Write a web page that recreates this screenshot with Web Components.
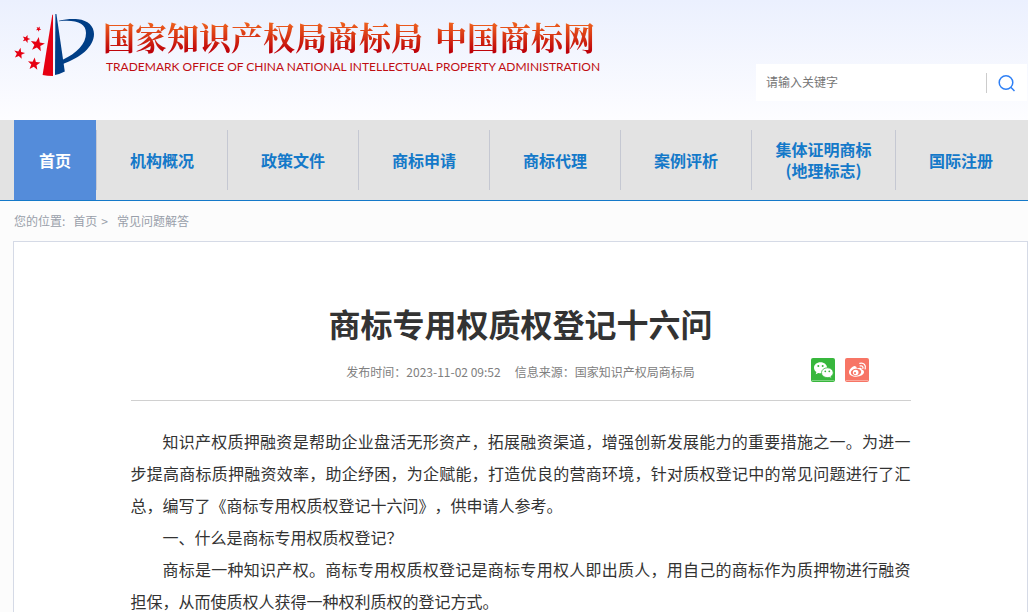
<!DOCTYPE html>
<html lang="zh-CN">
<head>
<meta charset="utf-8">
<meta name="viewport" content="width=device-width, initial-scale=1">
<title>商标专用权质权登记十六问</title>
<style>
    body {
        margin: 0;
        background: #fcfcfc;
        color: #333;
        font-family: "Noto Sans CJK SC", sans-serif;
        font-size: 12px;
        text-spacing-trim: space-all;
    }
</style>
</head>
<body>
<site-header>
    <site-logo></site-logo>
    <site-search></site-search>
</site-header>
<site-nav>
    <nav-item active>首页</nav-item>
    <nav-item>机构概况</nav-item>
    <nav-item>政策文件</nav-item>
    <nav-item>商标申请</nav-item>
    <nav-item>商标代理</nav-item>
    <nav-item>案例评析</nav-item>
    <nav-item wide>集体证明商标<br>(地理标志)</nav-item>
    <nav-item>国际注册</nav-item>
</site-nav>
<bread-crumb></bread-crumb>
<article-card>
    <span slot="title">商标专用权质权登记十六问</span>
    <span slot="date">发布时间：2023-11-02 09:52</span>
    <span slot="source">信息来源：国家知识产权局商标局</span>
    <share-links slot="share"></share-links>
    <p>知识产权质押融资是帮助企业盘活无形资产，拓展融资渠道，增强创新发展能力的重要措施之一。为进一步提高商标质押融资效率，助企纾困，为企赋能，打造优良的营商环境，针对质权登记中的常见问题进行了汇总，编写了《商标专用权质权登记十六问》，供申请人参考。</p>
    <p>一、什么是商标专用权质权登记？</p>
    <p>商标是一种知识产权。商标专用权质权登记是商标专用权人即出质人，用自己的商标作为质押物进行融资担保，从而使质权人获得一种权利质权的登记方式。</p>
</article-card>

<script>
class SiteHeader extends HTMLElement {
    constructor() {
        super();
        this.attachShadow({ mode: 'open' });
        this.shadowRoot.innerHTML = `
            <style>
                :host {
                    display: block;
                    background: linear-gradient(#ebf0fe, #fdfdff);
                }
                header {
                    display: flex;
                    justify-content: space-between;
                    align-items: flex-start;
                    height: 106px;
                    padding: 14px 1px 0 14px;
                }
                ::slotted(site-search) {
                    margin-top: 50px;
                }
            </style>
            <header><slot></slot></header>
        `;
    }
}

class SiteLogo extends HTMLElement {
    constructor() {
        super();
        this.attachShadow({ mode: 'open' });
        this.shadowRoot.innerHTML = `
            <style>
                :host {
                    display: block;
                }
                a {
                    display: flex;
                    gap: 7px;
                    text-decoration: none;
                    white-space: nowrap;
                }
                svg {
                    display: block;
                    flex: none;
                }
                .name {
                    display: flex;
                    gap: 12px;
                    margin-top: 2px;
                    font: 700 32px/40px "Noto Serif CJK SC", "Noto Sans CJK SC", serif;
                    color: transparent;
                    background: linear-gradient(#f0641e 15%, #bd0009 90%);
                    -webkit-background-clip: text;
                    background-clip: text;
                }
                .en {
                    padding-left: 3px;
                    font: 12px/22px Lato, sans-serif;
                    color: #c00d12;
                }
            </style>
            <a href="#">
                <svg width="82" height="63" viewBox="14 14 82 63" aria-hidden="true">
                    <defs>
                        <path id="star" d="M0-10 2.5-3.2 9.5-3.1 4 1.3 5.9 8.1 0 4.2-5.9 8.1-4 1.3-9.5-3.1-2.5-3.2Z"/>
                    </defs>
                    <g fill="#e60012">
                        <path d="M52.3 14.8H53V76Q47 76 42.6 75Z"/>
                        <use href="#star" transform="translate(37.5 44.5) rotate(10) scale(.75)"/>
                        <use href="#star" transform="translate(34 64) rotate(6) scale(.66)"/>
                        <use href="#star" transform="translate(19.3 53.5) rotate(12) scale(.58)"/>
                        <use href="#star" transform="translate(26.2 38.9) rotate(18) scale(.42)"/>
                        <use href="#star" transform="translate(38.5 29) rotate(30) scale(.28)"/>
                    </g>
                    <g fill="#003e86">
                        <path d="M55.4 14H56.4L64.8 71.5Q60 74 55 75Z"/>
                        <path d="M59 20.7C65 19 73 18.6 78 19.2C88 20.3 94 26 94 34C94 47 80 58 62.8 64L62.2 60C77 53 86 44 86 33C86 23 76 19.5 59 21.3Z"/>
                    </g>
                </svg>
                <div>
                    <div class="name"><span>国家知识产权局商标局</span><span>中国商标网</span></div>
                    <div class="en">TRADEMARK OFFICE OF CHINA NATIONAL INTELLECTUAL PROPERTY ADMINISTRATION</div>
                </div>
            </a>
        `;
    }
}

class SiteSearch extends HTMLElement {
    constructor() {
        super();
        this.attachShadow({ mode: 'open' });
        this.shadowRoot.innerHTML = `
            <style>
                :host {
                    display: block;
                    width: 271px;
                    background: #fff;
                }
                form {
                    display: flex;
                    align-items: center;
                    height: 37px;
                }
                input {
                    flex: 1;
                    min-width: 0;
                    padding: 0 10px 2px;
                    border: 0;
                    outline: 0;
                    background: none;
                    font: inherit;
                }
                input::placeholder {
                    color: #757575;
                }
                button {
                    display: flex;
                    align-items: center;
                    justify-content: center;
                    width: 41px;
                    height: 20px;
                    padding: 0;
                    border: 0;
                    border-left: 1px solid #ccc;
                    background: none;
                    cursor: pointer;
                }
            </style>
            <form role="search">
                <input type="text" placeholder="请输入关键字" aria-label="请输入关键字">
                <button type="button" aria-label="搜索">
                    <svg width="18" height="18" viewBox="0 0 18 18" fill="none" stroke="#2f80f5" stroke-width="1.5">
                        <circle cx="8" cy="8.5" r="6.8"/>
                        <path d="M12.8 13.3 16.5 17"/>
                    </svg>
                </button>
            </form>
        `;
    }
}

class SiteNav extends HTMLElement {
    constructor() {
        super();
        this.attachShadow({ mode: 'open' });
        this.shadowRoot.innerHTML = `
            <style>
                :host {
                    display: block;
                    background: #e3e3e3;
                    border-bottom: 1px solid #1479c9;
                }
                nav {
                    display: flex;
                    height: 80px;
                    padding: 0 2px 0 14px;
                }
            </style>
            <nav><slot></slot></nav>
        `;
    }
}

class NavItem extends HTMLElement {
    constructor() {
        super();
        this.attachShadow({ mode: 'open' });
        this.shadowRoot.innerHTML = `
            <style>
                :host {
                    display: flex;
                    align-items: center;
                    flex: 1 1 0;
                }
                :host([wide]) {
                    flex: 0 0 144px;
                }
                :host([active]) {
                    flex: 0 0 82px;
                    align-items: stretch;
                }
                a {
                    display: flex;
                    flex: 1;
                    align-items: center;
                    justify-content: center;
                    height: 60px;
                    border-left: 1px solid #c5c8d2;
                    color: #1479c9;
                    font-size: 16px;
                    font-weight: bold;
                    line-height: 21px;
                    text-align: center;
                    text-decoration: none;
                    white-space: nowrap;
                }
                :host([active]) a {
                    height: auto;
                    border: 0;
                    background: #548cda;
                    color: #fff;
                }
            </style>
            <a href="#"><span><slot></slot></span></a>
        `;
    }
}

class BreadCrumb extends HTMLElement {
    constructor() {
        super();
        this.attachShadow({ mode: 'open' });
        this.shadowRoot.innerHTML = `
            <style>
                :host {
                    display: block;
                    padding: 0 14px;
                    color: #999faa;
                    line-height: 40px;
                }
                nav {
                    display: flex;
                }
                a {
                    color: inherit;
                    text-decoration: none;
                }
                .label {
                    margin-right: 8px;
                }
                .sep {
                    margin: 0 9px 0 4px;
                }
            </style>
            <nav>
                <span class="label">您的位置:</span>
                <a href="#">首页</a>
                <span class="sep">&gt;</span>
                <a href="#">常见问题解答</a>
            </nav>
        `;
    }
}

class ShareLinks extends HTMLElement {
    constructor() {
        super();
        this.attachShadow({ mode: 'open' });
        this.shadowRoot.innerHTML = `
            <style>
                :host {
                    display: flex;
                    gap: 10px;
                }
                a, svg {
                    display: block;
                }
            </style>
            <a href="#" aria-label="微信">
                <svg width="24" height="24" viewBox="0 0 24 24">
                    <rect width="24" height="24" rx="2" fill="#38b73d"/>
                    <path d="M1 22.5H23" stroke="#8fdb92" stroke-width=".8"/>
                    <path fill="#fff" d="M9.5 4.2C5.8 4.2 3 6.6 3 9.7C3 11.5 3.9 13 5.4 14L4.7 16.2L7.3 14.9Q8.4 15.2 9.5 15.2C13.2 15.2 16 12.8 16 9.7C16 6.6 13.2 4.2 9.5 4.2Z"/>
                    <path fill="#fff" stroke="#38b73d" stroke-width=".8" d="M16.3 9.8C13 9.8 10.5 12 10.5 14.7C10.5 17.5 13 19.6 16.3 19.6Q17.3 19.6 18.2 19.3L20.5 20.5L19.9 18.5C21.3 17.6 22.2 16.3 22.2 14.7C22.2 12 19.7 9.8 16.3 9.8Z"/>
                    <g fill="#38b73d">
                        <circle cx="7.3" cy="8" r="1"/>
                        <circle cx="11.7" cy="8" r="1"/>
                        <circle cx="14.3" cy="13.3" r=".9"/>
                        <circle cx="18.3" cy="13.3" r=".9"/>
                    </g>
                </svg>
            </a>
            <a href="#" aria-label="微博">
                <svg width="24" height="24" viewBox="0 0 24 24">
                    <rect width="24" height="24" rx="2" fill="#f77565"/>
                    <path d="M1 22.5H23" stroke="#fbb5ac" stroke-width=".8"/>
                    <path fill="#fff" d="M10.2 8.2C8.8 7.3 4 11 4 14.3C4 17.2 7.3 18.8 11 18.8C15.8 18.8 19 16.5 19 14.1C19 12.6 17.8 11.9 16.6 11.6C17.2 9.8 15.7 9 12 10.4C11.5 10.5 12.1 8.8 10.2 8.2Z"/>
                    <ellipse cx="11" cy="14.3" rx="5.2" ry="3.5" fill="#f77565" transform="rotate(-8 11 14.3)"/>
                    <circle cx="10.7" cy="14.5" r="2.8" fill="#fff"/>
                    <circle cx="10" cy="15" r="1.1" fill="#f77565"/>
                    <path fill="none" stroke="#fff" stroke-width="1.3" stroke-linecap="round" d="M14.8 5.3C18.8 4.2 21.3 7.4 20.2 10.9M15.2 7.9C17.2 7.4 18.4 8.8 17.9 10.4"/>
                </svg>
            </a>
        `;
    }
}

class ArticleCard extends HTMLElement {
    constructor() {
        super();
        this.attachShadow({ mode: 'open' });
        this.shadowRoot.innerHTML = `
            <style>
                :host {
                    display: block;
                    margin-left: 13px;
                    padding: 57px 20px;
                    border: 1px solid #d5dae6;
                    background: #fff;
                }
                article {
                    max-width: 780px;
                    margin: 0 auto;
                }
                h1 {
                    margin: 0;
                    font-size: 32px;
                    line-height: 48px;
                    text-align: center;
                }
                .meta {
                    display: grid;
                    grid-template-columns: 1fr auto 1fr;
                    align-items: start;
                    padding: 11px 0 14px;
                    border-bottom: 1px solid #d0d0d0;
                    color: #808080;
                    line-height: 28px;
                }
                .info {
                    display: flex;
                    grid-column: 2;
                    align-items: baseline;
                    gap: 14px;
                }
                slot[name="share"]::slotted(*) {
                    justify-self: end;
                    margin-right: 42px;
                }
                .body {
                    padding-top: 24px;
                    font-size: 16px;
                    line-height: 32px;
                    text-align: justify;
                }
                .body ::slotted(p) {
                    margin: 0;
                    text-indent: 2em;
                }
            </style>
            <article>
                <h1><slot name="title"></slot></h1>
                <div class="meta">
                    <div class="info">
                        <slot name="date"></slot>
                        <slot name="source"></slot>
                    </div>
                    <slot name="share"></slot>
                </div>
                <div class="body"><slot></slot></div>
            </article>
        `;
    }
}

customElements.define('site-header', SiteHeader);
customElements.define('site-logo', SiteLogo);
customElements.define('site-search', SiteSearch);
customElements.define('site-nav', SiteNav);
customElements.define('nav-item', NavItem);
customElements.define('bread-crumb', BreadCrumb);
customElements.define('share-links', ShareLinks);
customElements.define('article-card', ArticleCard);
</script>
</body>
</html>
